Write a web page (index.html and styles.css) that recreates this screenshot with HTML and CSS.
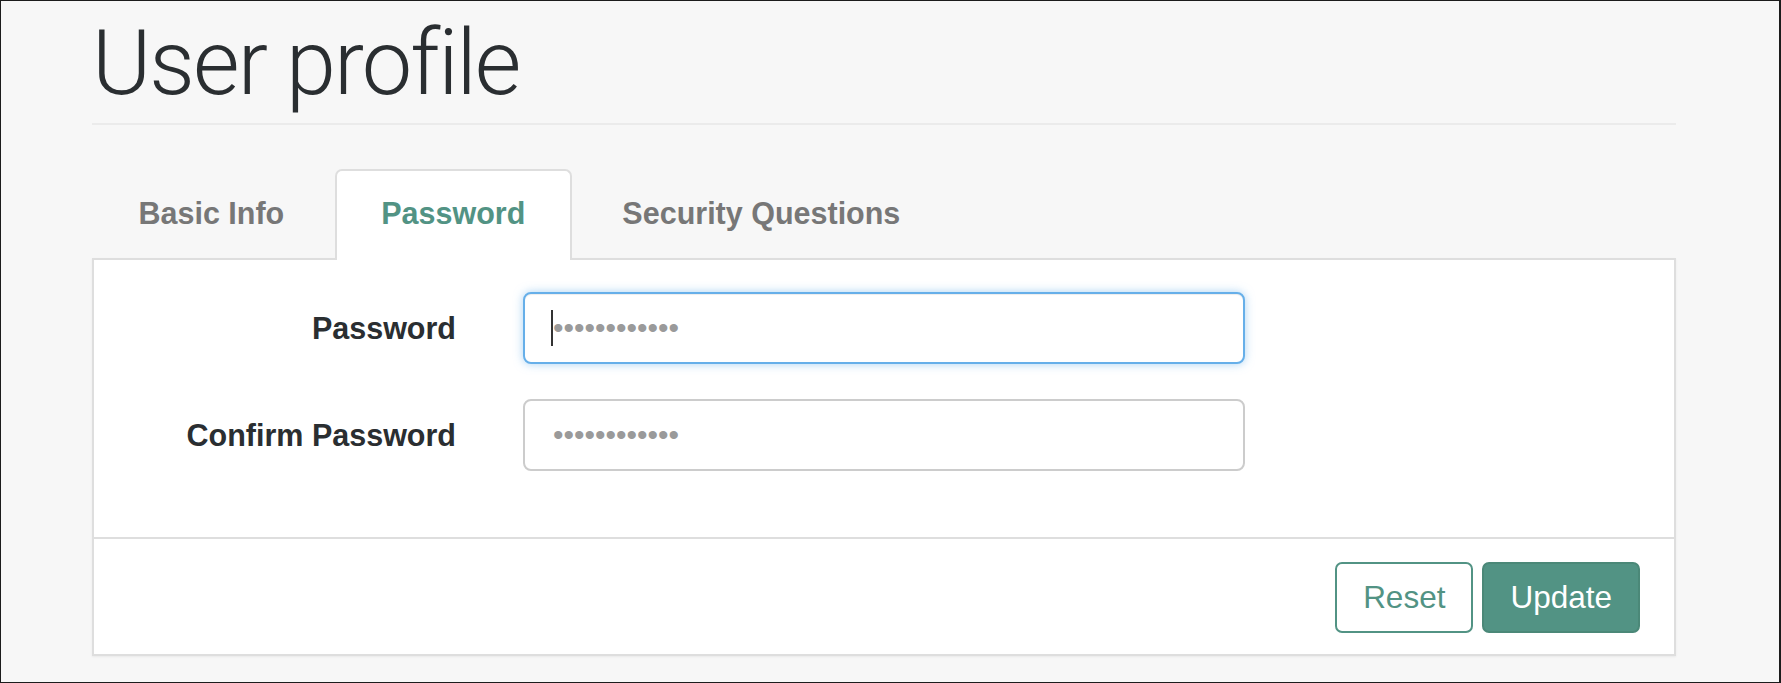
FILE: index.html
```html
<!DOCTYPE html>
<html lang="en">
<head>
<meta charset="utf-8">
<title>User profile</title>
<link rel="stylesheet" href="styles.css">
</head>
<body>
<div class="frame">
  <div class="container">
    <h1 class="page-title">User profile</h1>
    <ul class="tabs">
      <li class="tab">Basic Info</li>
      <li class="tab active">Password</li>
      <li class="tab">Security Questions</li>
    </ul>
    <div class="panel">
      <div class="panel-body">
        <div class="form-row">
          <label class="form-label">Password</label>
          <div class="field">
            <input class="form-input focused" type="password" placeholder="••••••••••••">
            <span class="caret"></span>
          </div>
        </div>
        <div class="form-row">
          <label class="form-label">Confirm Password</label>
          <div class="field">
            <input class="form-input" type="password" placeholder="••••••••••••">
          </div>
        </div>
      </div>
      <div class="panel-footer">
        <button class="btn btn-outline">Reset</button>
        <button class="btn btn-primary">Update</button>
      </div>
    </div>
  </div>
</div>
</body>
</html>
```

FILE: styles.css
```css
* { box-sizing: border-box; }
html, body { margin: 0; padding: 0; }
body {
  font-family: "Liberation Sans", Arial, sans-serif;
  color: #2a2e31;
}
.frame {
  width: 1781px;
  height: 683px;
  border: 1px solid #1c1c1c;
  border-right-width: 2px;
  background: #f7f7f7;
  overflow: hidden;
}
.container {
  width: 1584px;
  margin-left: 91px;
}
.page-title {
  margin: 13px 0 0 0;
  font-family: Roboto, "Liberation Sans", sans-serif;
  font-weight: 300;
  font-size: 90px;
  line-height: 99px;
  letter-spacing: -1.9px;
  color: #2a2e31;
  padding-bottom: 10px;
  border-bottom: 2px solid #ebebeb;
}
.tabs {
  list-style: none;
  margin: 44px 0 0 0;
  padding: 0;
  display: flex;
  gap: 4px;
  position: relative;
  z-index: 1;
}
.tab {
  font-weight: bold;
  font-size: 30.5px;
  line-height: 43px;
  padding: 21px 44.5px 25px;
  color: #777;
  border: 2px solid transparent;
  border-bottom: none;
  border-radius: 7px 7px 0 0;
  margin-bottom: -2px;
  height: 91px;
}
.tab.active {
  color: #529384;
  background: #fff;
  border-color: #dedede;
}
.panel {
  background: #fff;
  border: 2px solid #dedede;
  box-shadow: 0 1px 2px rgba(0,0,0,0.06);
}
.panel-body {
  padding: 32px 0 66px 0;
  display: flex;
  flex-direction: column;
  gap: 35px;
}
.form-row {
  display: grid;
  grid-template-columns: 362px 722px;
  column-gap: 67px;
  align-items: center;
}
.form-label {
  text-align: right;
  font-weight: bold;
  font-size: 30.5px;
  color: #2a2e31;
}
.field {
  position: relative;
  width: 722px;
}
.form-input {
  display: block;
  width: 722px;
  height: 72px;
  border: 2px solid #cccccc;
  border-radius: 8px;
  padding: 0 28px;
  font-family: "Liberation Sans", Arial, sans-serif;
  font-size: 30px;
  color: #555;
  background: #fff;
  outline: none;
}
.form-input::placeholder {
  color: #9a9a9a;
  opacity: 1;
}
.form-input.focused {
  border-color: #66afe9;
  box-shadow: inset 0 1px 1px rgba(0,0,0,0.075), 0 0 10px rgba(102,175,233,0.55);
}
.caret {
  position: absolute;
  left: 28px;
  top: 18px;
  width: 2px;
  height: 36px;
  background: #333;
}
.panel-footer {
  border-top: 2px solid #dedede;
  padding: 23px 34px 21px 0;
  display: flex;
  justify-content: flex-end;
  gap: 9px;
}
.btn {
  height: 71px;
  padding: 0 26px;
  border-radius: 7px;
  font-family: "Liberation Sans", Arial, sans-serif;
  font-size: 31.5px;
  border: 2px solid #529384;
  cursor: pointer;
}
.btn-outline {
  background: #fff;
  color: #529384;
}
.btn-primary {
  background: #529384;
  border-color: #4b8878;
  color: #fff;
}
```
